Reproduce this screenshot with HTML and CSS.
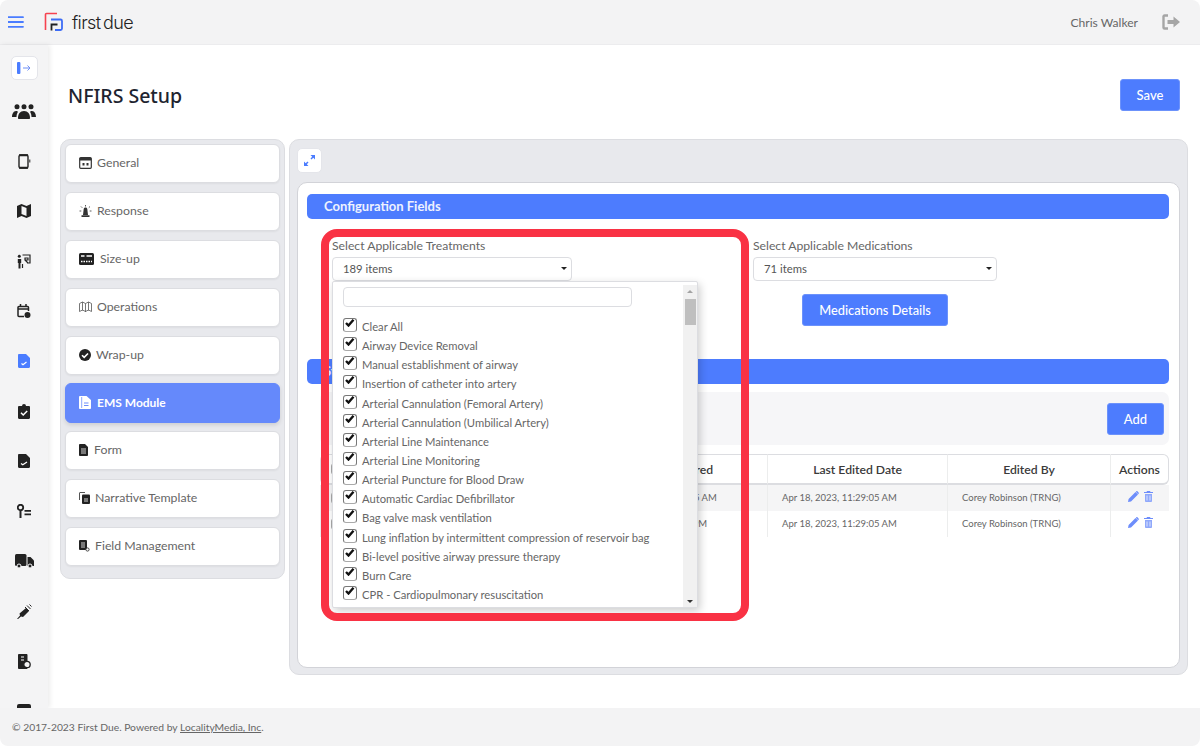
FILE: index.html
```html
<!DOCTYPE html>
<html lang="en">
<head>
    <meta charset="UTF-8">
    <title>NFIRS Setup</title>
    <link rel="stylesheet" href="styles.css">
</head>
<body>
    <div class="app">
        <header class="topbar">
            <svg class="burger" width="16" height="12" viewBox="0 0 16 12"><path d="M0 1.2h15M0 6h15M0 10.8h15" stroke="#4a7cff" stroke-width="1.8" fill="none" stroke-linecap="round"/></svg>
            <svg class="logo-mark" width="20" height="20" viewBox="0 0 20 20" fill="none">
                <path d="M1.500 18V2.500a1 1 0 0 1 1-1H13" stroke="#f6424f" stroke-width="1.600"/>
                <path d="M7 7.500h9.500a1.500 1.500 0 0 1 1.500 1.500v7.500a1.500 1.500 0 0 1-1.500 1.500H11" stroke="#3d6cf5" stroke-width="1.800"/>
                <path d="M7.500 18.500v-6h6" stroke="#222" stroke-width="1.800"/>
            </svg>
            <span class="logo-text">first due</span>
            <span class="user-name">Chris Walker</span>
            <svg class="logout" width="18" height="16" viewBox="0 0 18 16" fill="none">
                <path d="M6 1.500H2.500a1 1 0 0 0-1 1v11a1 1 0 0 0 1 1H6" stroke="#a5a5a5" stroke-width="2.400"/>
                <path d="M5.500 6h6V2.500L18 8l-6.500 5.500V10h-6z" fill="#a5a5a5"/>
            </svg>
        </header>

        <div class="middle">
            <nav class="rail">
                <button class="rail-toggle">
                    <svg width="14" height="12" viewBox="0 0 14 12"><rect x="0" y="0" width="3.400" height="12" rx="1" fill="#4a7cff"/><path d="M6 6h7M10.500 3.500L13 6l-2.500 2.500" stroke="#6f8ff5" stroke-width="1" fill="none"/></svg>
                </button>
                <a class="rail-icon rail-icon-first"><svg width="24" height="15" viewBox="0 0 24 15" fill="#222"><circle cx="5" cy="2.800" r="2.500"/><circle cx="12" cy="2.800" r="2.500"/><circle cx="19" cy="2.800" r="2.500"/><path d="M0 13c0-3 1.500-6 4-6 1 0 1.500.2 2 .7C5 9.500 4.500 11 4.500 13zM24 13c0-3-1.500-6-4-6-1 0-1.500.2-2 .7C19 9.500 19.500 11 19.500 13zM6 14c0-4 2-7 6-7s6 3 6 7c0 .6-.4 1-1 1H7c-.6 0-1-.4-1-1z"/></svg></a>
                <a class="rail-icon"><svg width="13" height="15" viewBox="0 0 13 15" fill="none"><rect x="1" y="1" width="9" height="13" rx="1.500" stroke="#222" stroke-width="1.400"/><path d="M11.800 5.500v3" stroke="#222" stroke-width="1"/><path d="M1 1.200h9M1 13.800h9" stroke="#222" stroke-width="2"/></svg></a>
                <a class="rail-icon"><svg width="14" height="14" viewBox="0 0 14 14" fill="#222"><path d="M0 2L4.500 0 9.500 2 14 0v12L9.500 14 4.500 12 0 14z"/><path d="M4.500 2l5 2v8l-5-2z" fill="#f4f4f5"/></svg></a>
                <a class="rail-icon"><svg width="14" height="15" viewBox="0 0 14 15" fill="none"><circle cx="2.300" cy="2.300" r="1.500" fill="#222"/><path d="M.8 5h3.400v4h-.7v5.500H1.500V9H.8z" fill="#222"/><path d="M5.500 1H13v8h-3M8 4h3v2H8zM8 6l3 3M5.500 10v4" stroke="#222" stroke-width="1.200"/></svg></a>
                <a class="rail-icon"><svg width="14" height="15" viewBox="0 0 14 15" fill="none"><path d="M7 12.500H2a1 1 0 0 1-1-1V3.500a1 1 0 0 1 1-1h8.500a1 1 0 0 1 1 1V7" stroke="#222" stroke-width="1.500"/><path d="M3.500 0v3M9 0v3M1 5h10" stroke="#222" stroke-width="1.500"/><circle cx="10.500" cy="11" r="3" fill="#222"/></svg></a>
                <a class="rail-icon"><svg width="12" height="14" viewBox="0 0 12 14"><path d="M1.200 0H8l4 4v8.800c0 .7-.5 1.200-1.200 1.200H1.200C.5 14 0 13.500 0 12.800V1.200C0 .5.500 0 1.200 0z" fill="#4a7cff"/><path d="M3.500 9.500l1.500 1.200L8.500 8" stroke="#fff" stroke-width="1.200" fill="none"/></svg></a>
                <a class="rail-icon"><svg width="12" height="15" viewBox="0 0 12 15"><path d="M1.200 2H4a2 2 0 0 1 4 0h2.800c.7 0 1.200.5 1.200 1.200v10.600c0 .7-.5 1.200-1.200 1.200H1.200C.5 15 0 14.500 0 13.800V3.200C0 2.500.5 2 1.200 2z" fill="#222"/><path d="M3 8.800l2.200 2.200L9.200 7" stroke="#fff" stroke-width="1.500" fill="none"/></svg></a>
                <a class="rail-icon"><svg width="12" height="14" viewBox="0 0 12 14"><path d="M1.200 0H8l4 4v8.800c0 .7-.5 1.200-1.200 1.200H1.200C.5 14 0 13.500 0 12.800V1.200C0 .5.500 0 1.200 0z" fill="#222"/><path d="M3 9.500l1.800 1.300L9 8" stroke="#fff" stroke-width="1.300" fill="none"/></svg></a>
                <a class="rail-icon"><svg width="14" height="14" viewBox="0 0 14 14" fill="#222"><circle cx="3.500" cy="3.500" r="2.700" fill="none" stroke="#222" stroke-width="1.800"/><path d="M2.500 6h2v8h-2zM7.500 6H14v1.800H7.500zM7.500 9.500H14v1.800H7.500z"/></svg></a>
                <a class="rail-icon"><svg width="19" height="14" viewBox="0 0 19 14" fill="#222"><rect x="0" y="0" width="11.500" height="12" rx="1.500"/><path d="M12.500 3h3L19 6.500V12h-6.500z"/><circle cx="4" cy="12" r="2" stroke="#f4f4f5"/><circle cx="15" cy="12" r="2" stroke="#f4f4f5"/></svg></a>
                <a class="rail-icon"><svg width="15" height="15" viewBox="0 0 15 15" fill="#222"><path d="M0 15l3-3.500-.5-2L9 4l3 3-6 6-2-.5L1 15z"/><path d="M10 1.500l3.500 3.500M12.500 0.500l2 2M8 3l4 4" stroke="#222" stroke-width="1"/></svg></a>
                <a class="rail-icon"><svg width="13" height="15" viewBox="0 0 13 15"><path d="M1 0h7.500c.5 0 1 .5 1 1v13c0 .5-.5 1-1 1H1c-.5 0-1-.5-1-1V1c0-.5.500-1 1-1z" fill="#222"/><path d="M3 3h3M3 6h3" stroke="#fff" stroke-width="1.200"/><circle cx="9" cy="10.500" r="3.200" fill="#f4f4f5" stroke="#222" stroke-width="1.300"/></svg></a>
                <a class="rail-icon"><svg width="14" height="14" viewBox="0 0 14 14"><rect width="14" height="14" rx="2" fill="#222"/></svg></a>
            </nav>

            <main class="main">
                <div class="page-head">
                    <h1>NFIRS Setup</h1>
                    <button class="btn btn-save">Save</button>
                </div>

                <div class="layout">
                    <aside class="tabs">
                        <a class="tab"><svg width="13" height="12" viewBox="0 0 13 12" fill="none"><rect x=".7" y=".7" width="11.600" height="10.600" rx="1" stroke="#333" stroke-width="1.200"/><path d="M.7 1h11.600v2.500H.7z" fill="#333"/><path d="M3.500 6h2v2.500h-2zM7.500 6h2v2.500h-2z" fill="#333"/></svg><span>General</span></a>
                        <a class="tab"><svg width="13" height="12" viewBox="0 0 12 12" fill="#333"><path d="M3.500 10l.7-6c.1-.8.8-1.500 1.800-1.500s1.700.7 1.800 1.500l.7 6zM2 10.200h8V12H2z"/><path d="M6 0v1.500M1.500 1.500l1.200 1.200M10.500 1.500L9.300 2.700M0 6h1.800M10.200 6H12" stroke="#333" stroke-width=".8"/></svg><span>Response</span></a>
                        <a class="tab tab-sizeup"><svg width="15" height="12" viewBox="0 0 15 12"><rect width="15" height="12" rx="1.500" fill="#222"/><path d="M2 3h3.500M7.500 3H13" stroke="#fff" stroke-width="1.600"/><path d="M2 8.500h11" stroke="#fff" stroke-width="1.600" stroke-dasharray="1.500 1"/></svg><span>Size-up</span></a>
                        <a class="tab"><svg width="13" height="12" viewBox="0 0 13 12" fill="none" stroke="#555" stroke-width=".8"><path d="M.5 2.500l3-1.500 3 1.500 3-1.500 3 1.500v8l-3-1.500-3 1.500-3-1.500-3 1.500zM3.500 1v8.500M6.500 2.500V11M9.500 1v8.500"/></svg><span>Operations</span></a>
                        <a class="tab tab-wrap"><svg width="12" height="12" viewBox="0 0 12 12"><circle cx="6" cy="6" r="6" fill="#222"/><path d="M3 6.200l2.200 2.200L9 4.500" stroke="#fff" stroke-width="1.600" fill="none"/></svg><span>Wrap-up</span></a>
                        <a class="tab tab-active"><svg width="12" height="13" viewBox="0 0 12 13"><path d="M0 1c0-.5.500-1 1-1h6.500L12 4v8c0 .5-.5 1-1 1H1c-.5 0-1-.5-1-1z" fill="#fff"/><path d="M2.700 1v11" stroke="#6d8dfb" stroke-width=".8"/><path d="M5 7h4.500M5 9.500h4.500" stroke="#6d8dfb" stroke-width="1"/></svg><span>EMS Module</span></a>
                        <a class="tab tab-form"><svg width="9" height="12" viewBox="0 0 9 12"><path d="M0 1c0-.5.500-1 1-1h5l3 3v8c0 .5-.5 1-1 1H1c-.5 0-1-.5-1-1z" fill="#222"/><path d="M2 5h5M2 7h5M2 9h5" stroke="#fff" stroke-width=".8"/></svg><span>Form</span></a>
                        <a class="tab tab-narrative"><svg width="11" height="12" viewBox="0 0 11 12"><path d="M.5 8V1c0-.3.200-.5.500-.5h5" stroke="#555" fill="none"/><rect x="3" y="2.500" width="8" height="9.500" rx="1" fill="#222"/><path d="M5 7h4M5 9h4" stroke="#fff" stroke-width=".8"/></svg><span>Narrative Template</span></a>
                        <a class="tab tab-narrative"><svg width="11" height="12" viewBox="0 0 11 12"><rect width="8" height="10" rx="1" fill="#222"/><path d="M2 3h4M2 5h4M2 7h4" stroke="#fff" stroke-width=".8"/><circle cx="8.500" cy="9.500" r="1.600" fill="#fff" stroke="#444"/></svg><span>Field Management</span></a>
                    </aside>

                    <section class="content">
                        <button class="expand">
                            <svg width="11" height="11" viewBox="0 0 11 11" fill="#4a7cff"><path d="M6.500 0H11v4.500L9.300 2.800 7.500 4.500 6.500 3.500 8.200 1.700zM0 6.500V11h4.500L2.800 9.300 4.500 7.500 3.500 6.500 1.700 8.200z"/></svg>
                        </button>

                        <div class="card">
                            <div class="bar">Configuration Fields</div>

                            <div class="fields">
                                <div class="field">
                                    <label>Select Applicable Treatments</label>
                                    <div class="select">189 items<i class="caret"></i></div>
                                </div>
                                <div class="field">
                                    <label>Select Applicable Medications</label>
                                    <div class="select">71 items<i class="caret"></i></div>
                                    <button class="btn btn-details">Medications Details</button>
                                </div>
                            </div>

                            <div class="bar bar-second">Stations</div>

                            <div class="toolbar">
                                <button class="btn btn-add">Add</button>
                            </div>

                            <table class="grid">
                                <thead>
                                    <tr>
                                        <th class="col-check"><span class="row-check"></span></th>
                                        <th class="col-name"></th>
                                        <th class="col-entered">Date Entered</th>
                                        <th class="col-edited">Last Edited Date</th>
                                        <th class="col-by">Edited By</th>
                                        <th class="col-actions">Actions</th>
                                    </tr>
                                </thead>
                                <tbody id="gridBody"></tbody>
                            </table>
                        </div>
                    </section>
                </div>
            </main>
        </div>

        <footer class="footer">© 2017-2023 First Due. Powered by <a>LocalityMedia, Inc</a>.</footer>

        <!-- opened multiselect and the red callout drawn over it -->
        <div class="dropdown">
            <div class="dropdown-list">
                <input class="dropdown-search" type="text">
                <ul id="optionList"></ul>
            </div>
            <div class="scrollbar">
                <i class="arrow-up"></i>
                <div class="thumb"></div>
                <i class="arrow-down"></i>
            </div>
        </div>
        <div class="callout"></div>
    </div>

    <script>
        const options = [
            'Clear All',
            'Airway Device Removal',
            'Manual establishment of airway',
            'Insertion of catheter into artery',
            'Arterial Cannulation (Femoral Artery)',
            'Arterial Cannulation (Umbilical Artery)',
            'Arterial Line Maintenance',
            'Arterial Line Monitoring',
            'Arterial Puncture for Blood Draw',
            'Automatic Cardiac Defibrillator',
            'Bag valve mask ventilation',
            'Lung inflation by intermittent compression of reservoir bag',
            'Bi-level positive airway pressure therapy',
            'Burn Care',
            'CPR - Cardiopulmonary resuscitation'
        ];

        const tick = '<svg width="10" height="8" viewBox="0 0 10 8"><path d="M1 4l2.500 2.500L8.500 .8" stroke="#111" stroke-width="2.400" fill="none"/></svg>';

        document.getElementById('optionList').innerHTML = options.map(name => `
            <li><span class="checkbox">${tick}</span>${name}</li>
        `).join('');

        const rows = [
            { entered: 'Apr 18, 2023, 11:29:05 AM', shaded: true },
            { entered: 'Mar 1, 2023, 1:29:05 PM', shaded: false }
        ];

        const pencil = '<svg width="11" height="11" viewBox="0 0 11 11" fill="#6d8dfb"><path d="M0 11l.6-3L7.500 1l2.500 2.500L3 10.400zM8.200.4c.4-.4 1-.4 1.400 0l1 1c.4.4.4 1 0 1.400l-.4.400L7.800.8z"/></svg>';
        const trash = '<svg width="9" height="11" viewBox="0 0 9 11"><path d="M0 1.500h9M3 1.500V.5h3v1" stroke="#6d8dfb" fill="none"/><path d="M1 3h7v7c0 .5-.5 1-1 1H2c-.5 0-1-.5-1-1z" fill="#8fa8fb"/><path d="M3 4.500v5M6 4.500v5" stroke="#fff" stroke-width=".7"/></svg>';

        document.getElementById('gridBody').innerHTML = rows.map(row => `
            <tr class="${row.shaded ? 'shaded' : ''}">
                <td><span class="row-check"></span></td>
                <td></td>
                <td class="cell-text">${row.entered}</td>
                <td class="cell-text">Apr 18, 2023, 11:29:05 AM</td>
                <td class="cell-text">Corey Robinson (TRNG)</td>
                <td class="cell-actions">${pencil}${trash}</td>
            </tr>
        `).join('');
    </script>
</body>
</html>
```

FILE: styles.css
```css
* {
    margin: 0;
    padding: 0;
    box-sizing: border-box;
}

body {
    font-family: 'Lato', 'Liberation Sans', sans-serif;
    background: #fff;
    color: #555;
    overflow: hidden;
}

button {
    font-family: inherit;
}

.app {
    position: relative;
    width: 1200px;
    height: 746px;
    display: flex;
    flex-direction: column;
    border-radius: 8px;
    overflow: hidden;
}

/* Top bar */
.topbar {
    height: 45px;
    flex: none;
    display: flex;
    align-items: center;
    background: #f3f3f4;
    border-bottom: 1px solid #ececee;
    padding: 0 20px 0 8px;
}

.logo-mark {
    margin-left: 20px;
}

.logo-text {
    margin-left: 8px;
    font-family: 'Inter', sans-serif;
    font-size: 18px;
    font-weight: 300;
    letter-spacing: -0.6px;
    word-spacing: -2px;
    color: #222;
}

.user-name {
    margin-left: auto;
    font-size: 12.100px;
    color: #666;
}

.logout {
    margin-left: 24px;
}

/* Body area */
.middle {
    flex: 1;
    display: flex;
    min-height: 0;
}

.rail {
    width: 48px;
    flex: none;
    display: flex;
    flex-direction: column;
    align-items: center;
    background: #f4f4f5;
    box-shadow: 2px 0 5px rgba(0, 0, 0, 0.08);
    overflow: hidden;
    padding: 11px 0 0 0;
    z-index: 1;
}

.rail-toggle {
    width: 27px;
    height: 24px;
    flex: none;
    display: flex;
    align-items: center;
    justify-content: center;
    background: #fff;
    border: 1px solid #e4e5ea;
    border-radius: 5px;
    margin-bottom: 21px;
}

.rail-icon {
    height: 50px;
    flex: none;
    display: flex;
    align-items: center;
    justify-content: center;
    width: 100%;
}

.rail-icon-first {
    height: 20px;
    margin-bottom: 15px;
}

.main {
    flex: 1;
    min-width: 0;
    background: #fff;
    padding-left: 12px;
}

.page-head {
    height: 94px;
    display: flex;
    align-items: center;
    justify-content: space-between;
    padding: 6px 20px 0 8px;
}

.page-head h1 {
    font-family: 'Noto Sans', sans-serif;
    font-size: 19.500px;
    font-weight: 500;
    color: #1e2430;
}

.btn {
    background: #4d7cfe;
    color: #fff;
    border: 1px solid #6c92fb;
    border-radius: 3px;
    font-size: 13px;
    font-weight: 500;
}

.btn-save {
    width: 60px;
    height: 32px;
}

.layout {
    display: flex;
    gap: 4px;
    align-items: flex-start;
}

/* Left tabs */
.tabs {
    width: 225px;
    background: #e8e9ed;
    border: 1px solid #dcdde1;
    border-radius: 10px;
    padding: 4px;
    display: flex;
    flex-direction: column;
    gap: 9px;
    padding-bottom: 12px;
}

.tab {
    height: 39px;
    flex: none;
    display: flex;
    align-items: center;
    gap: 5px;
    padding-left: 13px;
    padding-bottom: 2px;
    background: #fff;
    border: 1px solid #dcdde1;
    border-radius: 6px;
    box-shadow: 0 1px 2px rgba(0, 0, 0, 0.05);
    font-size: 12.300px;
    color: #666;
}

.tab svg {
    flex: none;
}

.tab-sizeup {
    gap: 6px;
}

.tab-active {
    background: #6589fb;
    border-color: #6589fb;
    color: #fff;
    font-weight: 700;
    font-size: 12px;
    gap: 6px;
    height: 40px;
    margin-bottom: -1px;
    margin-top: -1px;
    box-shadow: 0 2px 4px rgba(0, 0, 0, 0.12);
}

.tab-form {
    gap: 6px;
}

/* Right panel */
.content {
    width: 899px;
    height: 536px;
    background: #e8e9ed;
    border: 1px solid #dcdde1;
    border-radius: 10px;
    padding: 8px 7px 7px 7px;
}

.expand {
    width: 25px;
    height: 25px;
    display: flex;
    align-items: center;
    justify-content: center;
    background: #fff;
    border: 1px solid #e4e5ea;
    border-radius: 5px;
    margin-bottom: 9px;
}

.card {
    height: 486px;
    background: #fff;
    border: 1px solid #d2d3d8;
    border-radius: 10px;
    padding: 11px 10px 0 9px;
}

.bar {
    height: 25px;
    line-height: 24px;
    background: #4d7cfe;
    border-radius: 5px;
    color: #eef2ff;
    font-size: 13px;
    font-weight: 700;
    padding-left: 17px;
}

.fields {
    display: flex;
    height: 140px;
    padding: 19px 0 0 25px;
}

.field {
    width: 421px;
    flex: none;
}

.field label {
    display: block;
    font-size: 12.200px;
    line-height: 16px;
    color: #666;
    margin-bottom: 3px;
}

.select {
    position: relative;
    width: 240px;
    height: 24px;
    line-height: 22px;
    background: #fff;
    border: 1px solid #dcdde1;
    border-radius: 4px;
    font-size: 11.300px;
    color: #555;
    padding-left: 10px;
}

.field:nth-child(2) .select {
    width: 244px;
}

.caret {
    position: absolute;
    right: 4px;
    top: 9px;
    border-left: 3px solid transparent;
    border-right: 3px solid transparent;
    border-top: 3px solid #222;
}

.btn-details {
    display: block;
    width: 146px;
    height: 32px;
    margin: 13px 0 0 49px;
    font-size: 12.800px;
}

.toolbar {
    margin-top: 8px;
    margin-left: 13px;
    height: 53px;
    background: #f6f6f8;
    border-radius: 7px;
    display: flex;
    align-items: center;
    justify-content: flex-end;
    padding-right: 5px;
}

.btn-add {
    width: 57px;
    height: 32px;
}

.grid {
    width: 849px;
    margin: 9px 0 0 13px;
    border-collapse: separate;
    border-spacing: 0;
    table-layout: fixed;
}

.grid th {
    height: 31px;
    background: #fff;
    border-top: 1px solid #dcdde1;
    border-bottom: 2px solid #dcdde1;
    border-left: 1px solid #eceded;
    font-size: 12.200px;
    font-weight: 600;
    color: #3a3a3a;
}

.grid th:first-child {
    border-left-color: #dcdde1;
    border-radius: 6px 0 0 6px;
}

.grid th:last-child {
    border-right: 1px solid #dcdde1;
    border-radius: 0 6px 6px 0;
}

.col-check { width: 20px; }
.col-name { width: 247px; }
.col-entered { width: 180px; }
.col-edited { width: 180px; }
.col-by { width: 163px; }
.col-actions { width: 59px; }

.grid td {
    height: 26px;
    padding-bottom: 1px;
    border-left: 1px solid #eceded;
    font-size: 9.500px;
    color: #666;
}

.shaded td {
    background: #f5f5f6;
}

.row-check {
    display: block;
    width: 14px;
    height: 12px;
    margin-left: 10px;
    border: 1px solid #aaa;
    border-radius: 3px;
}

.cell-text {
    padding-left: 14px;
    white-space: nowrap;
}

.cell-actions {
    text-align: center;
}

.cell-actions svg + svg {
    margin-left: 5px;
}

/* Open multiselect */
.dropdown {
    position: absolute;
    left: 332px;
    top: 281px;
    width: 366px;
    height: 327px;
    background: #fff;
    border: 1px solid #dcdde1;
    border-radius: 2px;
    box-shadow: 2px 3px 8px rgba(0, 0, 0, 0.2);
    display: flex;
    z-index: 2;
}

.dropdown-list {
    flex: 1;
    overflow: hidden;
}

.dropdown-search {
    display: block;
    width: 289px;
    height: 20px;
    margin: 5px 0 10px 10px;
    background: #fff;
    border: 1px solid #dcdde1;
    border-radius: 4px;
}

.dropdown ul {
    list-style: none;
}

.dropdown li {
    height: 19.150px;
    display: flex;
    align-items: center;
    font-size: 11.230px;
    color: #666;
    padding-left: 10px;
    white-space: nowrap;
}

.checkbox {
    width: 14px;
    height: 14px;
    flex: none;
    display: flex;
    margin-right: 5px;
    margin-top: -3px;
    padding: 0 0 0 1px;
    background: #fff;
    border: 1px solid #777;
    border-bottom-color: #aaa;
    border-radius: 3px;
}

.scrollbar {
    width: 14px;
    flex: none;
    margin: 3px 0 0 0;
    background: #f1f1f1;
    display: flex;
    flex-direction: column;
    align-items: center;
    position: relative;
}

.arrow-up,
.arrow-down {
    position: absolute;
    left: 4px;
    border-left: 3px solid transparent;
    border-right: 3px solid transparent;
}

.arrow-up {
    top: 5px;
    border-bottom: 3px solid #a3a3a3;
}

.arrow-down {
    bottom: 4px;
    border-top: 3px solid #333;
}

.thumb {
    width: 11px;
    height: 26px;
    margin-top: 14px;
    background: #bfbfbf;
}

/* Red callout */
.callout {
    position: absolute;
    left: 321px;
    top: 229px;
    width: 428px;
    height: 392px;
    border: 8px solid #f93244;
    border-radius: 16px;
    z-index: 3;
}

/* Footer */
.footer {
    height: 38px;
    flex: none;
    line-height: 38px;
    background: #f3f3f4;
    padding-left: 12px;
    font-size: 10.300px;
    color: #666;
    position: relative;
    z-index: 2;
}

.footer a {
    text-decoration: underline;
}
```
